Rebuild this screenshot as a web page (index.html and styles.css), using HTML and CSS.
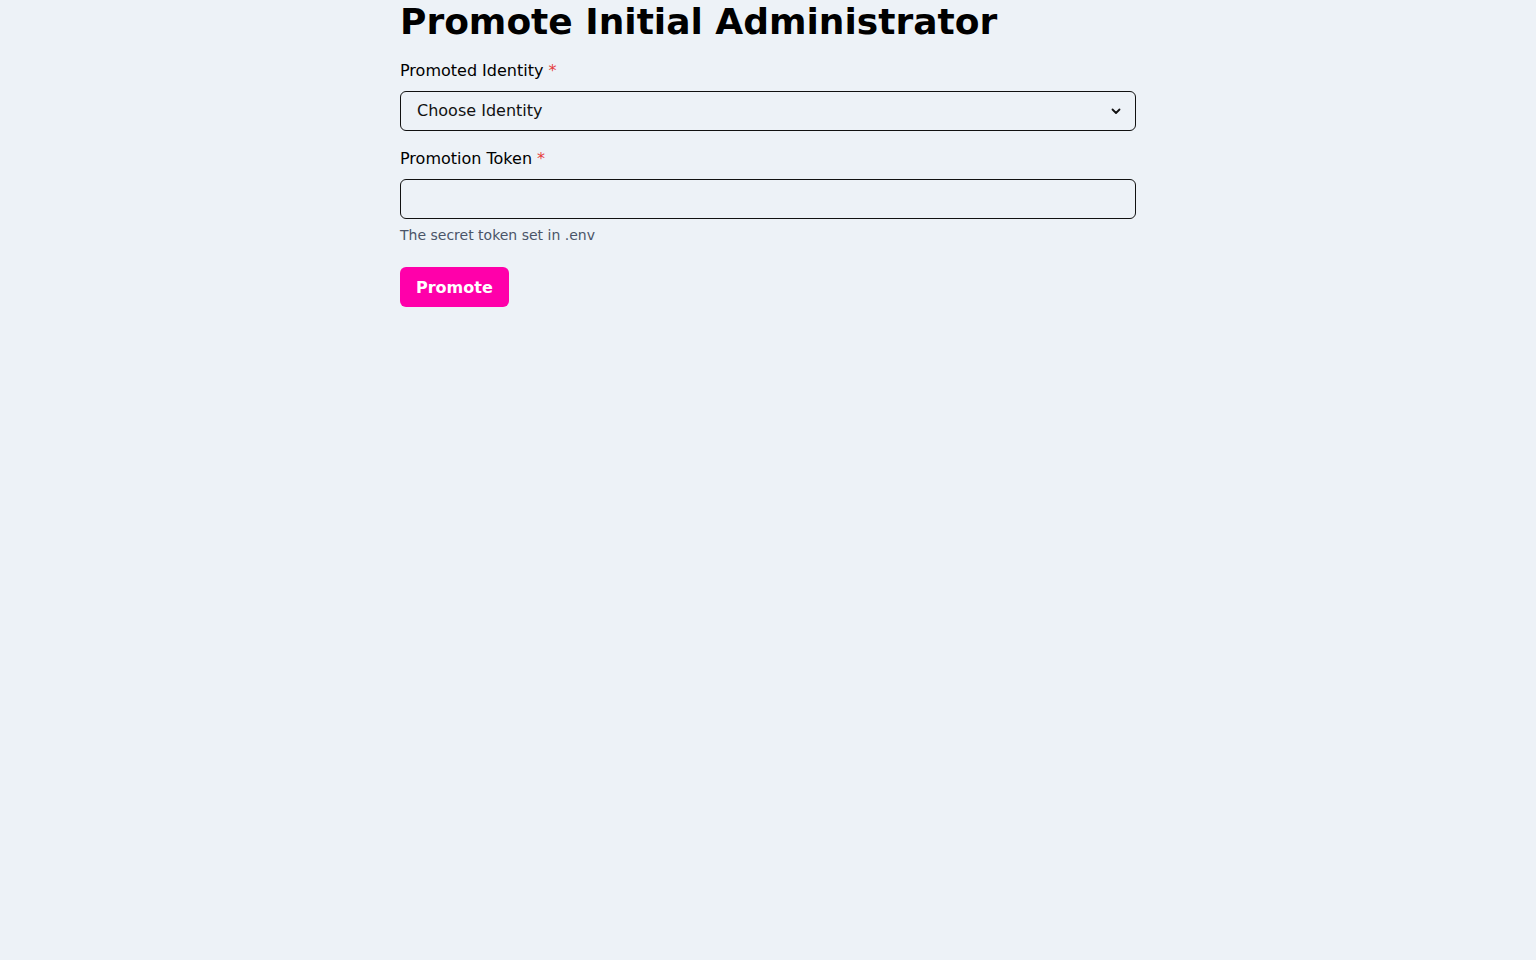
FILE: index.html
```html
<!DOCTYPE html>
<html lang="en">
<head>
<meta charset="utf-8">
<title>Promote Initial Administrator</title>
<link rel="stylesheet" href="styles.css">
</head>
<body>
<main class="page">
  <h1 class="title">Promote Initial Administrator</h1>
  <form class="form">
    <div class="field">
      <label class="label" for="identity">Promoted Identity <span class="req">*</span></label>
      <div class="select-wrap">
        <select id="identity" class="control select">
          <option>Choose Identity</option>
        </select>
        <svg class="chev" width="12" height="12" viewBox="0 0 12 12" aria-hidden="true"><path d="M2.5 4.5 6 8l3.5-3.5" fill="none" stroke="#111" stroke-width="1.8" stroke-linecap="round" stroke-linejoin="round"/></svg>
      </div>
    </div>
    <div class="field">
      <label class="label" for="token">Promotion Token <span class="req">*</span></label>
      <input id="token" class="control" type="text">
      <p class="help">The secret token set in .env</p>
    </div>
    <div>
      <button class="btn" type="button">Promote</button>
    </div>
  </form>
</main>
</body>
</html>
```
FILE: styles.css
```css
* { box-sizing: border-box; }
html, body { margin: 0; padding: 0; }
body {
  background: #edf2f7;
  font-family: "DejaVu Sans", sans-serif;
  color: #000;
}
.page {
  width: 736px;
  margin: 0 auto;
}
.title {
  margin: 0;
  font-size: 36px;
  line-height: 44px;
  font-weight: 700;
}
.form {
  display: flex;
  flex-direction: column;
  gap: 16px;
  margin-top: 15px;
}
.field {
  display: flex;
  flex-direction: column;
}
.label {
  font-size: 16px;
  line-height: 24px;
  margin-bottom: 8px;
}
.req { color: #e53e3e; }
.select-wrap { position: relative; }
.control {
  display: block;
  width: 100%;
  height: 40px;
  border: 1px solid #111;
  border-radius: 6px;
  background: #edf2f7;
  font-family: "DejaVu Sans", sans-serif;
  font-size: 16px;
  color: #111;
  padding: 0 16px;
  outline: none;
}
.select {
  appearance: none;
  -webkit-appearance: none;
  padding-bottom: 2px;
}
.chev {
  position: absolute;
  right: 14px;
  top: 14px;
  pointer-events: none;
}
.help {
  margin: 8px 0 0;
  font-size: 14px;
  line-height: 16px;
  color: #4a5568;
}
.btn {
  margin-top: 8px;
  height: 40px;
  padding: 0 16px;
  border: none;
  border-radius: 6px;
  background: #ff00aa;
  color: #fff;
  font-family: "DejaVu Sans", sans-serif;
  font-size: 16px;
  font-weight: 700;
}
```
